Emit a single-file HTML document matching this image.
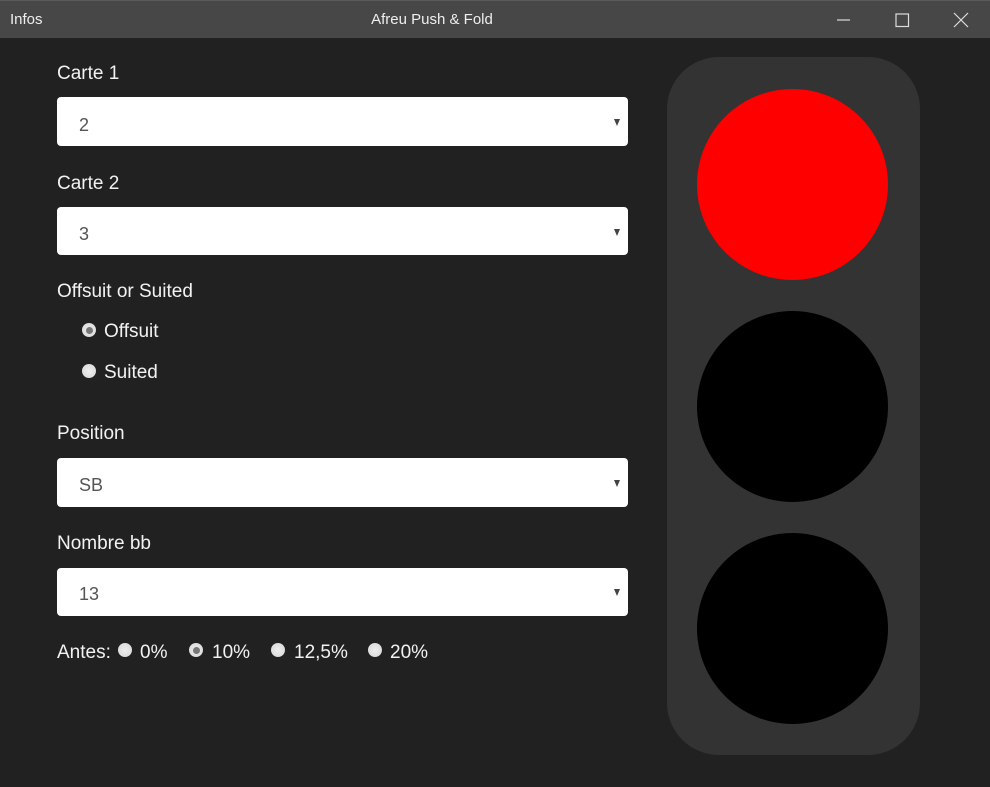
<!DOCTYPE html>
<html><head><style>
body{margin:0;width:990px;height:787px;background:#212121;font-family:"Liberation Sans",sans-serif;position:relative;overflow:hidden;color:#f2f2f2}
.tb{position:absolute;left:0;top:0;width:990px;height:38px;background:#474747;border-top:1px solid #5a5a5a;box-sizing:border-box}
.tb .l{position:absolute;left:10px;top:10px;font-size:15px;color:#eee}
.tb .c{position:absolute;left:0;width:864px;text-align:center;top:10px;font-size:15px;color:#eee}
.lab{position:absolute;left:57px;font-size:19px;color:#f2f2f2}
.sel{position:absolute;left:57px;width:571px;background:#fff;border-radius:4px;box-sizing:border-box}
.sel span{position:absolute;left:22px;font-size:18px;color:#555}
.sel i{position:absolute;right:8px;width:0;height:0;border-left:3.5px solid transparent;border-right:3.5px solid transparent;border-top:7px solid #444}
.rad{position:absolute;width:14px;height:14px;border-radius:50%;background:radial-gradient(circle,#eee 0,#ddd 70%,#aaa 100%);box-sizing:border-box}
.rad.on::after{content:"";position:absolute;left:3.5px;top:3.5px;width:7px;height:7px;border-radius:50%;background:#777}
.t{position:absolute;font-size:19px;color:#f2f2f2}
.panel{position:absolute;left:667px;top:57px;width:253px;height:698px;background:#333;border-radius:52px}
.cir{position:absolute;left:697px;width:191px;height:191px;border-radius:50%;background:#000}
</style></head><body>
<div class="tb"><div class="l">Infos</div><div class="c">Afreu Push &amp; Fold</div>
<svg style="position:absolute;left:836px;top:12px" width="14" height="14"><line x1="1" y1="7" x2="14" y2="7" stroke="#ddd" stroke-width="1.2"/></svg>
<svg style="position:absolute;left:895px;top:12px" width="15" height="15"><rect x="1" y="1" width="12.5" height="12.5" fill="none" stroke="#ddd" stroke-width="1.2"/></svg>
<svg style="position:absolute;left:953px;top:11px" width="16" height="16"><path d="M1 1L15 15M15 1L1 15" stroke="#ddd" stroke-width="1.2"/></svg>
</div>
<div class="lab" style="top:63px">Carte 1</div>
<div class="sel" style="top:97px;height:49px"><span style="top:18px">2</span><i style="top:22px"></i></div>
<div class="lab" style="top:173px">Carte 2</div>
<div class="sel" style="top:207px;height:48px"><span style="top:17px">3</span><i style="top:22px"></i></div>
<div class="lab" style="top:281px">Offsuit or Suited</div>
<div class="rad on" style="left:82px;top:323px"></div><div class="t" style="left:104px;top:321px">Offsuit</div>
<div class="rad" style="left:82px;top:364px"></div><div class="t" style="left:104px;top:362px">Suited</div>
<div class="lab" style="top:423px">Position</div>
<div class="sel" style="top:458px;height:49px"><span style="top:17px">SB</span><i style="top:22px"></i></div>
<div class="lab" style="top:533px">Nombre bb</div>
<div class="sel" style="top:568px;height:48px"><span style="top:16px">13</span><i style="top:21px"></i></div>
<div class="t" style="left:57px;top:642px">Antes:</div>
<div class="rad" style="left:118px;top:643px"></div><div class="t" style="left:140px;top:642px">0%</div>
<div class="rad on" style="left:189px;top:643px"></div><div class="t" style="left:212px;top:642px">10%</div>
<div class="rad" style="left:271px;top:643px"></div><div class="t" style="left:294px;top:642px">12,5%</div>
<div class="rad" style="left:368px;top:643px"></div><div class="t" style="left:390px;top:642px">20%</div>
<div class="panel"></div>
<div class="cir" style="top:89px;background:#f00"></div>
<div class="cir" style="top:311px"></div>
<div class="cir" style="top:533px"></div>
</body></html>
